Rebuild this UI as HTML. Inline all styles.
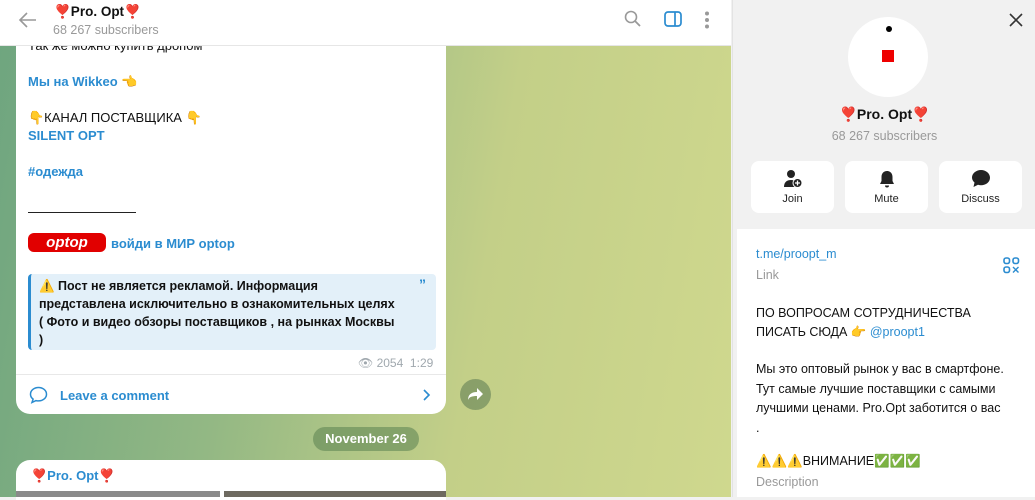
<!DOCTYPE html>
<html><head><meta charset="utf-8"><style>
*{margin:0;padding:0;box-sizing:border-box}
body{width:1035px;height:497px;overflow:hidden;font-family:"Liberation Sans","Noto Sans CJK SC",sans-serif;font-size:13px;position:relative;background:#f1f1f1}
.chat{position:absolute;left:0;top:0;width:731px;height:497px;background:linear-gradient(100deg,#6ea57f 0%,#93b884 35%,#c3cf88 65%,#cfd88e 100%)}
.hdr{position:absolute;left:0;top:0;width:731px;height:46px;background:#fff;border-bottom:1px solid #e6e6e6}
.bub{position:absolute;left:16px;width:430px;background:#fff}
.blue{color:#2b8cd0}
.p{position:absolute;left:28px;white-space:nowrap}
.rp{position:absolute;left:732px;top:0;width:303px;height:497px;background:#f1f1f1;border-left:1px solid #e3e3e3}
.btn{position:absolute;top:161px;width:83px;height:52px;background:#fff;border-radius:8px;text-align:center;font-size:11px;color:#222}
.btn span{position:absolute;left:0;right:0;top:32px}
.btn svg{position:absolute;left:32px;top:8px}
.sec{position:absolute;left:4px;top:229px;width:299px;height:268px;background:#fff}
.t{position:absolute;left:19px;white-space:nowrap;font-size:12.5px;color:#111}
</style></head><body>
<div class="chat">
 <div class="bub" style="top:46px;height:368px;border-radius:0 0 14px 14px"></div>
 <div class="p" style="top:38px;color:#111">Так же можно купить дропом</div>
 <div class="p blue" style="top:74px;font-weight:bold">Мы на Wikkeo <span style="color:#e6a317">👈</span></div>
 <div class="p" style="top:110px;color:#111">👇КАНАЛ ПОСТАВЩИКА 👇</div>
 <div class="p blue" style="top:128px;font-weight:bold">SILENT OPT</div>
 <div class="p blue" style="top:164px;font-weight:bold">#одежда</div>
 <div style="position:absolute;left:28px;top:212px;width:108px;height:1px;background:#222"></div>
 <div style="position:absolute;left:28px;top:233px;width:78px;height:19px;background:#e10000;border-radius:6px;color:#fff;font-weight:bold;font-style:italic;font-size:15px;text-align:center;line-height:19px">optop</div>
 <div class="p blue" style="top:236px;left:111px;font-weight:bold">войди в МИР optop</div>
 <div style="position:absolute;left:28px;top:274px;width:408px;height:76px;background:#e3f0f9;border-left:3px solid #2b8cd0;border-radius:4px"></div>
 <div style="position:absolute;left:39px;top:277px;line-height:18px;color:#111;font-weight:bold;font-size:12.5px">⚠️ Пост не является рекламой. Информация<br>представлена исключительно в ознакомительных целях<br>( Фото и видео обзоры поставщиков , на рынках Москвы<br>)</div>
 <div style="position:absolute;left:419px;top:276px;color:#2b8cd0;font-weight:bold;font-size:14px">”</div>
 <div style="position:absolute;left:358px;top:356px;color:#a0a8ae;font-size:12px">👁 2054 &nbsp;1:29</div>
 <div style="position:absolute;left:16px;top:374px;width:430px;height:1px;background:#e8e8e8"></div>
 <svg style="position:absolute;left:29px;top:386px" width="19" height="18" viewBox="0 0 19 18"><path d="M9.5 1.5C5 1.5 1.5 4.5 1.5 8.2c0 2 1 3.7 2.6 4.9L3 16.5l4-1.9c.8.2 1.6.3 2.5.3 4.5 0 8-3 8-6.7S14 1.5 9.5 1.5z" fill="none" stroke="#2b8cd0" stroke-width="1.5"/></svg>
 <div class="p blue" style="top:388px;left:60px;font-weight:bold">Leave a comment</div>
 <svg style="position:absolute;left:422px;top:388px" width="10" height="14"><path d="M2 2l5 5-5 5" fill="none" stroke="#2b8cd0" stroke-width="1.6"/></svg>
 <div style="position:absolute;left:460px;top:379px;width:31px;height:31px;border-radius:50%;background:rgba(90,120,80,.55)"></div>
 <svg style="position:absolute;left:467px;top:387px" width="17" height="15"><path d="M10 1l6 6-6 6V9C5 9 2 10 1 13c0-5 3-8 9-8z" fill="#fff"/></svg>
 <div style="position:absolute;left:313px;top:427px;width:106px;height:24px;border-radius:12px;background:rgba(90,130,80,.55);color:#fff;font-weight:bold;text-align:center;line-height:24px">November 26</div>
 <div class="bub" style="top:460px;height:40px;border-radius:14px 14px 0 0"></div>
 <div class="p blue" style="top:468px;left:31px;font-weight:bold">❣️Pro. Opt❣️</div>
 <div style="position:absolute;left:16px;top:491px;width:204px;height:6px;background:#8a8a8a"></div>
 <div style="position:absolute;left:224px;top:491px;width:222px;height:6px;background:#6e6a60"></div>
</div>
<div class="hdr">
 <svg style="position:absolute;left:18px;top:11px" width="20" height="18"><path d="M18 9H3M9 2L2 9l7 7" fill="none" stroke="#999" stroke-width="1.6"/></svg>
 <div style="position:absolute;left:54px;top:4px;font-weight:bold;font-size:13.5px;color:#111">❣️Pro. Opt❣️</div>
 <div style="position:absolute;left:53px;top:23px;color:#999;font-size:12.5px">68 267 subscribers</div>
 <svg style="position:absolute;left:624px;top:10px" width="18" height="18"><circle cx="7" cy="7" r="5.5" fill="none" stroke="#999" stroke-width="1.6"/><path d="M11 11l5 5" stroke="#999" stroke-width="1.8"/></svg>
 <svg style="position:absolute;left:664px;top:11px" width="18" height="16"><rect x="1" y="1" width="16" height="14" rx="3" fill="none" stroke="#2b8cd0" stroke-width="1.7"/><path d="M11 1v14" stroke="#2b8cd0" stroke-width="1.7"/></svg>
 <svg style="position:absolute;left:704px;top:11px" width="6" height="18"><circle cx="3" cy="2.5" r="2" fill="#999"/><circle cx="3" cy="9" r="2" fill="#999"/><circle cx="3" cy="15.5" r="2" fill="#999"/></svg>
</div>
<div class="rp">
 <svg style="position:absolute;left:276px;top:13px" width="14" height="14"><path d="M1 1l12 12M13 1L1 13" stroke="#333" stroke-width="1.6"/></svg>
 <div style="position:absolute;left:115px;top:17px;width:80px;height:80px;border-radius:50%;background:#fff"></div>
 <div style="position:absolute;left:153px;top:26px;width:6px;height:6px;border-radius:50%;background:#000"></div>
 <div style="position:absolute;left:149px;top:50px;width:12px;height:12px;background:#e00"></div>
 <div style="position:absolute;left:0;width:303px;top:106px;text-align:center;font-weight:bold;font-size:14px;color:#111">❣️Pro. Opt❣️</div>
 <div style="position:absolute;left:0;width:303px;top:129px;text-align:center;color:#999;font-size:12.5px">68 267 subscribers</div>
 <div class="btn" style="left:18px"><svg width="20" height="20"><circle cx="8" cy="5" r="4" fill="#222"/><path d="M1 18c0-5 3-7 7-7 2 0 3 .4 4 1v6z" fill="#222"/><circle cx="14.5" cy="14" r="4.5" fill="#222" stroke="#fff" stroke-width="1"/><path d="M14.5 11.5v5M12 14h5" stroke="#fff" stroke-width="1.3"/></svg><span>Join</span></div>
 <div class="btn" style="left:112px"><svg width="20" height="20"><path d="M10 2c-3.5 0-5.5 2.5-5.5 6v4L3 15h14l-1.5-3V8c0-3.5-2-6-5.5-6z" fill="#222"/><path d="M8 16.5a2 2 0 004 0" fill="#222"/></svg><span>Mute</span></div>
 <div class="btn" style="left:206px"><svg width="20" height="20"><path d="M10 1C5 1 1 4.5 1 8.5c0 2 1 3.8 2.5 5L2.5 18l4.5-2.2c1 .3 2 .4 3 .4 5 0 9-3.3 9-7.5S15 1 10 1z" fill="#222"/></svg><span>Discuss</span></div>
 <div class="sec">
  <div class="t" style="top:18px;color:#2b8cd0">t.me/proopt_m</div>
  <div class="t" style="top:39px;color:#999">Link</div>
  <svg style="position:absolute;left:266px;top:28px" width="17" height="17"><g fill="none" stroke="#2b8cd0" stroke-width="1.6"><rect x="1" y="1" width="5.5" height="5.5" rx="2"/><rect x="10" y="1" width="5.5" height="5.5" rx="2"/><rect x="1" y="10" width="5.5" height="5.5" rx="2"/></g><path d="M10 10l5.5 5.5M15.5 10L10 15.5" stroke="#2b8cd0" stroke-width="1.4"/></svg>
  <div class="t" style="top:75px;line-height:19px">ПО ВОПРОСАМ СОТРУДНИЧЕСТВА<br>ПИСАТЬ СЮДА 👉 <span style="color:#2b8cd0">@proopt1</span></div>
  <div class="t" style="top:131px;line-height:19.5px">Мы это оптовый рынок у вас в смартфоне.<br>Тут самые лучшие поставщики с самыми<br>лучшими ценами. Pro.Opt заботится о вас<br>.</div>
  <div class="t" style="top:225px">⚠️⚠️⚠️ВНИМАНИЕ✅✅✅</div>
  <div class="t" style="top:246px;color:#999">Description</div>
 </div>
</div>
</body></html>
